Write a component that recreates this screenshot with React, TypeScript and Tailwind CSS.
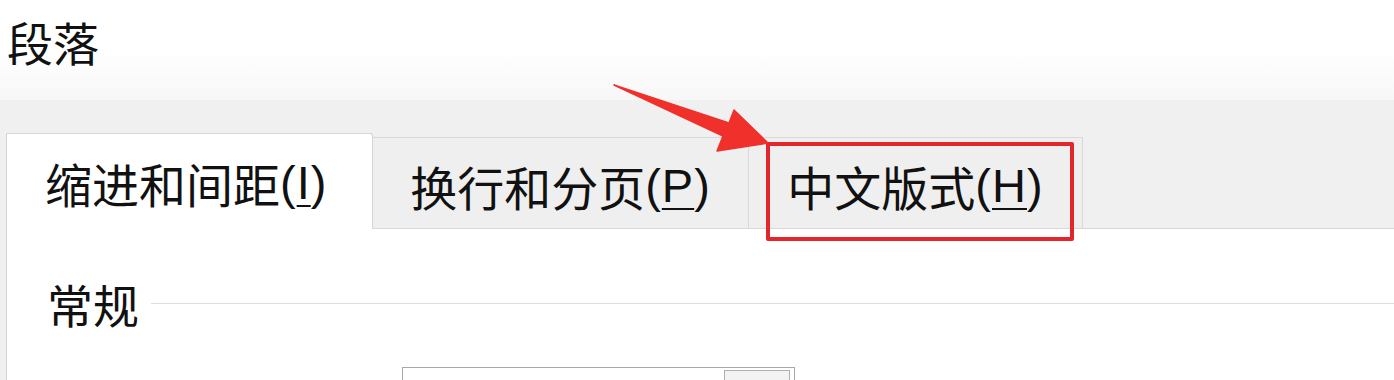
const cjk = { fontFamily: '"Microsoft YaHei", "Noto Sans CJK SC", "Noto Sans", sans-serif' };
const latin = { fontFamily: '"Liberation Sans", "Noto Sans CJK SC", sans-serif' };

function Label({ label, hotkey }: { label: string; hotkey: string }) {
  return (
    <>
      {label}
      <span style={latin} className="tracking-[1px] font-light">
        (<span className="underline underline-offset-[6px] decoration-2">{hotkey}</span>)
      </span>
    </>
  );
}

function Tab({ label, hotkey, active, width }: { label: string; hotkey: string; active?: boolean; width: string }) {
  if (active) {
    return (
      <div
        className={`${width} h-[96px] shrink-0 bg-white border-t border-r border-[#d6d6d6] rounded-tr-[3px] flex items-center pl-[38px] pt-[2px] text-[47px] leading-none text-[#111]`}
      >
        <Label label={label} hotkey={hotkey} />
      </div>
    );
  }
  return (
    <div
      className={`${width} h-[92px] shrink-0 bg-[#efefef] border-t border-r border-b border-[#d9d9d9] flex items-center justify-center pt-[4px] text-[47px] leading-none text-[#111]`}
    >
      <Label label={label} hotkey={hotkey} />
    </div>
  );
}

export default function App() {
  return (
    <div className="relative w-[1394px] h-[380px] overflow-hidden bg-white" style={cjk}>
      <div className="h-[100px] bg-gradient-to-b from-white via-white to-[#f7f7f7] pl-[7px] pt-[18px]">
        <h1 className="text-[46px] leading-none text-[#111]">段落</h1>
      </div>

      <div className="h-[280px] bg-[#f0f0f0] flex flex-col">
        <div className="h-[129px] shrink-0 flex items-end pl-[6px]">
          <div className="w-px h-[96px] bg-[#d6d6d6]" />
          <Tab label="缩进和间距" hotkey="I" active width="w-[366px]" />
          <Tab label="换行和分页" hotkey="P" width="w-[376px]" />
          <Tab label="中文版式" hotkey="H" width="w-[334px]" />
          <div className="flex-1 h-px bg-[#d6d6d6]" />
        </div>

        <div className="flex-1 bg-white ml-[6px] border-l border-[#d6d6d6]">
          <div className="flex items-start pt-[51px] pl-[40px]">
            <span className="text-[46px] leading-[46px] text-[#111]">常规</span>
            <div className="flex-1 h-px bg-[#dedede] mt-[23px] ml-[12px]" />
          </div>
          <div className="pl-[395px] pt-[41px]">
            <div className="w-[393px] h-[40px] border border-[#a8a8a8] bg-white flex justify-end pr-[4px] pt-[2px]">
              <div className="w-[66px] h-full border border-[#b0b0b0] bg-[#f3f3f3]" />
            </div>
          </div>
        </div>
      </div>

      {/* annotation: red box */}
      <div className="absolute left-[766px] top-[142px] w-[308px] h-[99px] border-[4px] border-[#e3262b] rounded-[2px]" />

      {/* annotation: arrow */}
      <svg className="absolute left-0 top-0" width="1394" height="380" viewBox="0 0 1394 380">
        <polygon
          points="614,85 729,123 734,110 768,143 717,151 723,136"
          fill="#f0302a"
          stroke="#f0302a"
          strokeWidth="1.5"
          strokeLinejoin="round"
        />
      </svg>
    </div>
  );
}
